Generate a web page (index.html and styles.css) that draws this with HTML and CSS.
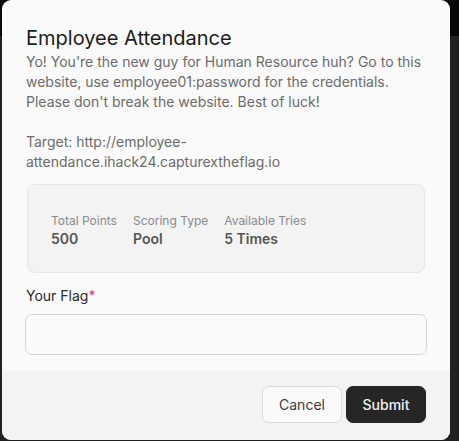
FILE: index.html
```html
<!DOCTYPE html>
<html>
<head>
<meta charset="utf-8">
<link rel="stylesheet" href="styles.css">
</head>
<body>
<div class="backdrop">
  <div class="modal">
    <div class="modal-body">
      <h2 class="title">Employee Attendance</h2>
      <p class="desc">Yo! You're the new guy for Human Resource huh? Go to this website, use employee01:password for the credentials. Please don't break the website. Best of luck!<br><br>Target: http://employee-attendance.ihack24.capturextheflag.io</p>
      <div class="stats">
        <div class="stat">
          <div class="stat-label">Total Points</div>
          <div class="stat-value">500</div>
        </div>
        <div class="stat">
          <div class="stat-label">Scoring Type</div>
          <div class="stat-value">Pool</div>
        </div>
        <div class="stat">
          <div class="stat-label">Available Tries</div>
          <div class="stat-value">5 Times</div>
        </div>
      </div>
      <label class="field-label" for="flag">Your Flag<span class="req">*</span></label>
      <input class="field-input" id="flag" type="text">
    </div>
    <div class="modal-footer">
      <button class="btn btn-cancel">Cancel</button>
      <button class="btn btn-submit">Submit</button>
    </div>
  </div>
</div>
</body>
</html>
```
FILE: styles.css
```css
* { box-sizing: border-box; }
html, body {
  margin: 0;
  padding: 0;
  height: 100%;
}
body {
  background: linear-gradient(to bottom, #080808 0, #080808 36px, #212121 36px);
  font-family: Inter, "Noto Sans", sans-serif;
  overflow: hidden;
}
.backdrop {
  padding-left: 2px;
}
.modal {
  width: 448px;
  height: 440px;
  background: #fafafa;
  border-radius: 9px;
  overflow: hidden;
  display: flex;
  flex-direction: column;
}
.modal-body {
  padding: 24px 24px 16px 24px;
  display: flex;
  flex-direction: column;
}
.title {
  margin: 0;
  font-size: 20px;
  line-height: 28px;
  font-weight: 400;
  color: #1c1c1c;
}
.desc {
  margin: 0;
  font-size: 14px;
  line-height: 20px;
  color: #6b6b6b;
}
.stats {
  margin-top: 12px;
  margin-left: 1px;
  margin-right: 1px;
  background: #f3f3f3;
  border: 1px solid #e6e6e6;
  border-radius: 8px;
  padding: 27px 24px 23px 23px;
  display: flex;
  gap: 16px;
}
.stat {
  display: flex;
  flex-direction: column;
}
.stat-label {
  font-size: 12px;
  line-height: 17px;
  color: #8a8a8a;
}
.stat-value {
  font-size: 14px;
  line-height: 20px;
  font-weight: 600;
  color: #555555;
}
.field-label {
  margin-top: 13px;
  font-size: 14px;
  line-height: 20px;
  color: #2a2a2a;
}
.req {
  color: #e5345a;
}
.field-input {
  margin-top: 8px;
  height: 41px;
  width: 402px;
  margin-left: -1px;
  border: 1px solid #d6d6d6;
  border-radius: 7px;
  background: #fafafa;
  font-family: inherit;
  font-size: 14px;
  padding: 0 12px;
  outline: none;
}
.modal-footer {
  flex: 1;
  background: #f3f3f3;
  display: flex;
  justify-content: flex-end;
  align-items: flex-start;
  gap: 4px;
  padding: 15px 24px 0 0;
}
.btn {
  height: 37px;
  width: 80px;
  border-radius: 7px;
  font-family: inherit;
  font-size: 14px;
  cursor: pointer;
}
.btn-cancel {
  background: #fafafa;
  border: 1px solid #dcdcdc;
  color: #3a3a3a;
}
.btn-submit {
  background: #262626;
  border: 1px solid #262626;
  color: #f2f2f2;
  font-weight: 500;
}
```
